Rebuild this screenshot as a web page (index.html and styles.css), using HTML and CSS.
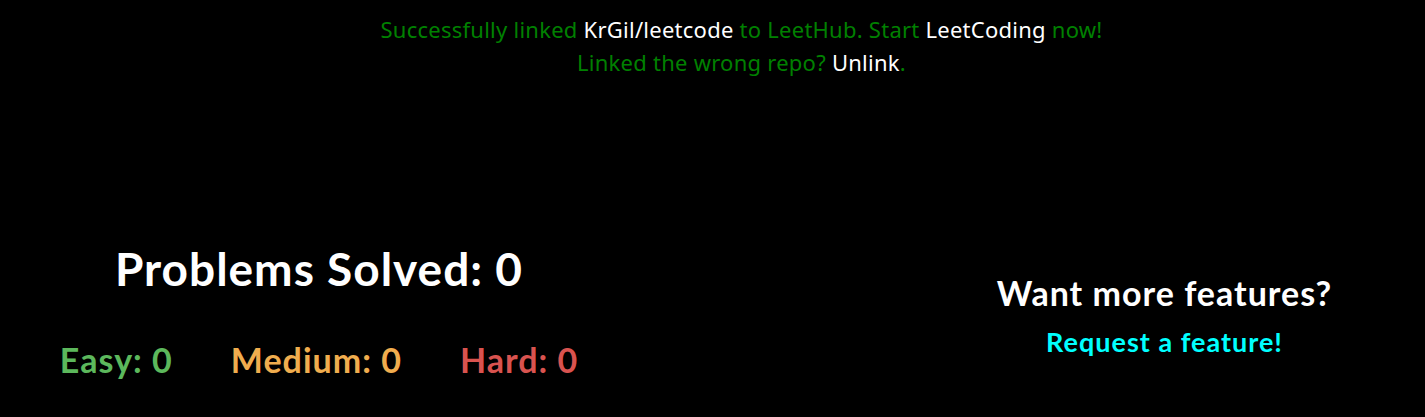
FILE: index.html
```html
<!DOCTYPE html>
<html>
<head>
<meta charset="utf-8">
<link rel="stylesheet" href="styles.css">
</head>
<body>
<div class="notice">
  <p class="line">Successfully linked <a class="link">KrGil/leetcode</a> to LeetHub. Start <a class="link">LeetCoding</a> now!</p>
  <p class="line">Linked the wrong repo? <a class="link">Unlink</a>.</p>
</div>
<div class="stats">
  <div class="solved">
    <h1 class="total">Problems Solved: 0</h1>
    <div class="levels">
      <span class="easy">Easy: 0</span>
      <span class="medium">Medium: 0</span>
      <span class="hard">Hard: 0</span>
    </div>
  </div>
  <div class="spacer"></div>
  <div class="features">
    <h2 class="want">Want more features?</h2>
    <a class="request">Request a feature!</a>
  </div>
</div>
</body>
</html>
```
FILE: styles.css
```css
html, body {
  margin: 0;
  background: #000;
  height: 100%;
}
body {
  font-family: "Noto Sans", sans-serif;
}
.notice {
  padding: 13px 0 0 58px;
  text-align: center;
  color: #008000;
  font-size: 22px;
  letter-spacing: 0.25px;
  height: 239px;
  box-sizing: border-box;
}
.line {
  margin: 0;
  line-height: 33px;
}
.link {
  color: #fff;
}
.stats {
  display: grid;
  grid-template-columns: 638px 266px 1fr;
  font-family: Lato, sans-serif;
  font-weight: 700;
  letter-spacing: 1px;
}
.solved {
  text-align: center;
}
.total {
  margin: 0;
  color: #fff;
  font-size: 46px;
  line-height: 60px;
}
.levels {
  display: flex;
  justify-content: center;
  gap: 58px;
  margin-top: 41px;
  font-size: 34px;
  line-height: 40px;
}
.easy { color: #5cb85c; }
.medium { color: #f0ad4e; }
.hard { color: #d9534f; }
.features {
  text-align: center;
  padding-top: 34px;
}
.want {
  margin: 0;
  color: #fff;
  font-size: 34px;
  line-height: 40px;
}
.request {
  display: block;
  margin-top: 9px;
  color: #00ffff;
  font-size: 27px;
  line-height: 40px;
}
```
